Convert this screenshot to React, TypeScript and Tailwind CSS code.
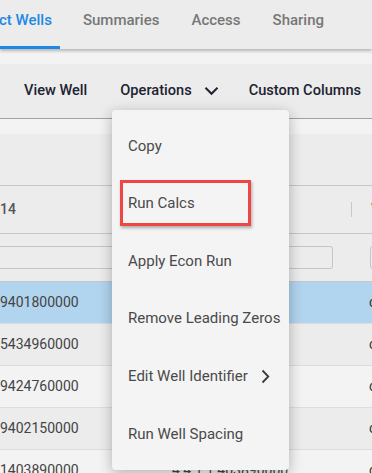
import React from "react";

const rows = [
  { a: "9401800000", b: "", bg: "bg-[#b1d4ef]" },
  { a: "5434960000", b: "", bg: "bg-[#ececec]" },
  { a: "9424760000", b: "", bg: "bg-[#f3f3f3]" },
  { a: "9402150000", b: "", bg: "bg-[#ececec]" },
  { a: "1403890000", b: "4 4 1 1 403890000", bg: "bg-[#f3f3f3]" },
];

const menuItems = [
  "Copy",
  "Run Calcs",
  "Apply Econ Run",
  "Remove Leading Zeros",
  "Edit Well Identifier",
  "Run Well Spacing",
];

export default function App() {
  return (
    <div className="relative w-[372px] h-[473px] overflow-hidden bg-[#ececec] font-['Roboto',sans-serif]">
      {/* Tab bar */}
      <div className="relative z-10 h-[49px] flex items-stretch bg-[#ececec] shadow-[0_2px_3px_rgba(0,0,0,0.25)] text-[15px] font-medium whitespace-nowrap">
        <div className="flex items-center pr-2 border-b-[3px] border-[#1e88e5] text-[#1e88e5] shrink-0">
          <span className="-ml-[30px] pb-[5px]">Select Wells</span>
        </div>
        <div className="flex items-center ml-[23px] pb-[8px] text-[#777] shrink-0">Summaries</div>
        <div className="flex items-center ml-8 pb-[8px] text-[#777] shrink-0">Access</div>
        <div className="flex items-center ml-8 pb-[8px] text-[#777] shrink-0">Sharing</div>
      </div>
      <div className="h-[15px] bg-[#f3f3f3]" />
      {/* Toolbar */}
      <div className="h-[55px] flex items-center border-b border-[#a0a0a0] text-[14.6px] font-medium text-[#202330] whitespace-nowrap">
        <span className="ml-[24px] shrink-0">View Well</span>
        <span className="ml-[33px] flex items-center shrink-0">
          Operations
          <svg className="ml-[12px]" width="15" height="10" viewBox="0 0 15 10" fill="none">
            <path d="M1.5 1.8 L7.5 7.8 L13.5 1.8" stroke="#202330" strokeWidth="2" />
          </svg>
        </span>
        <span className="ml-[30px] shrink-0">Custom Columns</span>
      </div>
      <div className="h-[15px] bg-[#f3f3f3]" />
      <div className="h-[52px] border-b border-[#c6c6ce]" />
      {/* Header row */}
      <div className="h-[48px] flex items-center border-b border-[#c6c6ce] text-[14px] font-medium whitespace-nowrap">
        <span className="w-[351px] shrink-0 text-[#555]">14</span>
        <span className="w-px h-[15px] shrink-0 bg-[#c8c8cc]" />
        <span className="ml-[19px] shrink-0 text-[#a0523a]">Well</span>
      </div>
      {/* Filter row */}
      <div className="h-[48px] flex items-start pt-[12px] border-b border-[#c4c4cc]">
        <div className="w-[333px] h-[23px] shrink-0 border-y border-r border-[#c4c4cc] rounded-r-[3px]" />
        <div className="ml-[37px] w-[40px] h-[23px] border border-[#c4c4cc] rounded-[3px] shrink-0" />
      </div>
      {/* Rows */}
      {rows.map((r, i) => (
        <div
          key={i}
          className={`h-[42px] flex items-center border-b border-[#dcdce4] text-[14px] text-[#444] whitespace-nowrap ${r.bg}`}
        >
          <span className="w-[172px] shrink-0">{r.a}</span>
          <span className="w-[197px] shrink-0">{r.b}</span>
          <span className="shrink-0 text-[#333]">comp</span>
        </div>
      ))}

      {/* Operations menu */}
      <div className="absolute left-[112px] top-[110px] w-[177px] h-[360px] py-[7px] bg-[#f4f4f4] rounded-[4px] shadow-[0_3px_14px_rgba(0,0,0,0.28)] text-[15px] text-[#4a4a4a] whitespace-nowrap">
        {menuItems.map((m, i) => (
          <div key={m} className="relative h-[57.6px] flex items-center pl-[16px]">
            {m}
            {i === 4 && (
              <svg className="ml-[13px]" width="9" height="15" viewBox="0 0 9 15" fill="none">
                <path d="M1.5 1.5 L7.3 7.5 L1.5 13.5" stroke="#3a3a3a" strokeWidth="1.8" />
              </svg>
            )}
            {i === 1 && (
              <span className="absolute left-[8px] top-[5px] w-[131px] h-[46px] border-[3px] border-[#f04545] shadow-[1px_2px_3px_rgba(0,0,0,0.3)]" />
            )}
          </div>
        ))}
      </div>
    </div>
  );
}
